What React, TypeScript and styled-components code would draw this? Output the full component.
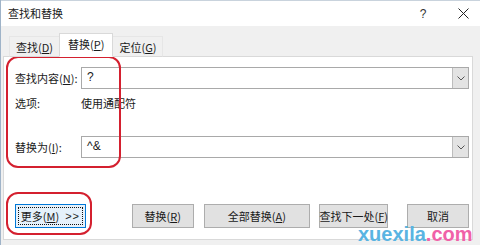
import styled, { createGlobalStyle } from "styled-components";

const GlobalStyle = createGlobalStyle`
    html, body {
        margin: 0;
        padding: 0;
        background: #f0f0f0;
    }
    body {
        font-family: "Noto Sans CJK SC", "Noto Sans", sans-serif;
        font-size: 11px;
        color: #1a1a1a;
    }
`;

const Window = styled.div`
    position: relative;
    width: 480px;
    height: 245px;
    overflow: hidden;
    display: flex;
    flex-direction: column;
    background: #f0f0f0;
    border-left: 1px solid #9fb3c8;
    box-sizing: border-box;
`;

const TitleBar = styled.div`
    height: 26px;
    flex-shrink: 0;
    display: flex;
    align-items: center;
    background: #ffffff;
    border-top: 1px solid #c9d3dd;
    box-sizing: border-box;
    padding-left: 7px;
`;

const Title = styled.span`
    flex: 1;
    font-size: 11px;
    line-height: 1;
`;

const TitleButton = styled.span<{ $w: number }>`
    width: ${(p) => p.$w}px;
    display: flex;
    justify-content: center;
    align-items: center;
    font-family: "Liberation Sans", sans-serif;
    font-size: 12px;
    color: #333;
`;

const TabStrip = styled.div`
    height: 31px;
    flex-shrink: 0;
    display: flex;
    align-items: flex-end;
    padding-left: 8px;
    position: relative;
    z-index: 1;
    margin-bottom: -1px;
`;

const Tab = styled.div<{ $active?: boolean }>`
    box-sizing: border-box;
    height: ${(p) => (p.$active ? "24px" : "21px")};
    padding: 0 ${(p) => (p.$active ? "8px" : "6px")};
    display: flex;
    align-items: center;
    justify-content: center;
    padding-bottom: ${(p) => (p.$active ? "2px" : "0")};
    background: ${(p) => (p.$active ? "#ffffff" : "#f0f0f0")};
    border: 1px solid ${(p) => (p.$active ? "#d9d9d9" : "#e6e6e6")};
    border-bottom: ${(p) => (p.$active ? "1px solid #ffffff" : "1px solid #d9d9d9")};
    margin-left: ${(p) => (p.$active ? "-1px" : "0")};
    margin-right: ${(p) => (p.$active ? "-1px" : "0")};
    position: relative;
    z-index: ${(p) => (p.$active ? 2 : 1)};
    font-size: 11px;
    white-space: nowrap;
`;

const Key = styled.span`
    text-decoration: underline;
    text-decoration-thickness: 1px;
    text-underline-offset: 1px;
`;

const Panel = styled.div`
    box-sizing: border-box;
    margin: 0 7px 0 2px;
    height: 184px;
    background: #ffffff;
    border: 1px solid #d9d9d9;
    display: flex;
    flex-direction: column;
    padding: 10px 3px 0 11px;
`;

const Form = styled.div`
    display: grid;
    grid-template-columns: 66px 1fr;
    align-items: center;
`;

const Label = styled.span<{ $top?: number }>`
    font-size: 11px;
    white-space: nowrap;
    margin-top: ${(p) => p.$top ?? 0}px;
`;

const Value = styled.span<{ $top?: number }>`
    font-size: 11px;
    margin-top: ${(p) => p.$top ?? 0}px;
`;

const ComboBox = styled.div<{ $top?: number }>`
    box-sizing: border-box;
    height: 22px;
    margin-top: ${(p) => p.$top ?? 0}px;
    border: 1px solid #a9a9a9;
    display: flex;
    align-items: stretch;
    background: #fff;
`;

const ComboText = styled.span`
    flex: 1;
    padding-left: 5px;
    display: flex;
    align-items: center;
    font-family: "Liberation Sans", sans-serif;
    font-size: 12px;
    padding-bottom: 3px;
`;

const DropButton = styled.span`
    width: 15px;
    display: flex;
    align-items: center;
    justify-content: center;
    background: #e3e3e3;
    border-left: 1px solid #bdbdbd;
`;

const ButtonRow = styled.div`
    margin-top: 46px;
    display: flex;
    align-items: center;
`;

const Button = styled.div<{ $width: number; $gap?: number; $focused?: boolean }>`
    box-sizing: border-box;
    width: ${(p) => p.$width}px;
    height: 24px;
    margin-left: ${(p) => p.$gap ?? 0}px;
    display: flex;
    align-items: center;
    justify-content: center;
    white-space: nowrap;
    background: ${(p) => (p.$focused ? "#e5f1fb" : "#e1e1e1")};
    border: 1px solid ${(p) => (p.$focused ? "#0078d7" : "#adadad")};
    font-size: 11px;
    position: relative;
    ${(p) =>
        p.$focused &&
        `
        &::after {
            content: "";
            position: absolute;
            inset: 2px;
            border: 1px dotted #111;
        }
    `}
`;

const Arrows = styled.span`
    font-family: "Liberation Sans", sans-serif;
    margin-left: 6px;
    letter-spacing: 1px;
`;

const Annotation = styled.div<{ $x: number; $y: number; $w: number; $h: number }>`
    position: absolute;
    left: ${(p) => p.$x}px;
    top: ${(p) => p.$y}px;
    width: ${(p) => p.$w}px;
    height: ${(p) => p.$h}px;
    box-sizing: border-box;
    border: 2px solid #d4202f;
    border-radius: 12px;
    pointer-events: none;
`;

const Watermark = styled.div`
    position: absolute;
    left: 357px;
    top: 224px;
    font-family: "Liberation Sans", sans-serif;
    font-weight: bold;
    font-size: 20px;
    line-height: 1;
`;

const Blue = styled.span`
    color: #5ab4e2;
`;

const Pink = styled.span`
    color: #f062a8;
`;

const Chevron = () => (
    <svg width="8" height="5" viewBox="0 0 8 5">
        <path d="M0.5 0.5 L4 4 L7.5 0.5" fill="none" stroke="#555" strokeWidth="1" />
    </svg>
);

const CloseIcon = () => (
    <svg width="11" height="11" viewBox="0 0 11 11">
        <path d="M0.5 0.5 L10.5 10.5 M10.5 0.5 L0.5 10.5" stroke="#222" strokeWidth="1" />
    </svg>
);

const App = () => {
    return (
        <>
            <GlobalStyle />
            <Window>
                <TitleBar>
                    <Title>查找和替换</Title>
                    <TitleButton $w={40}>?</TitleButton>
                    <TitleButton $w={3} />
                    <TitleButton $w={34}>
                        <CloseIcon />
                    </TitleButton>
                </TitleBar>
                <TabStrip>
                    <Tab>查找(<Key>D</Key>)</Tab>
                    <Tab $active>替换(<Key>P</Key>)</Tab>
                    <Tab>定位(<Key>G</Key>)</Tab>
                </TabStrip>
                <Panel>
                    <Form>
                        <Label>查找内容(<Key>N</Key>):</Label>
                        <ComboBox>
                            <ComboText>?</ComboText>
                            <DropButton>
                                <Chevron />
                            </DropButton>
                        </ComboBox>
                        <Label $top={6}>选项:</Label>
                        <Value $top={6}>使用通配符</Value>
                        <Label $top={25}>替换为(<Key>I</Key>):</Label>
                        <ComboBox $top={25}>
                            <ComboText>^&amp;</ComboText>
                            <DropButton>
                                <Chevron />
                            </DropButton>
                        </ComboBox>
                    </Form>
                    <ButtonRow>
                        <Button $width={71} $focused>
                            更多(<Key>M</Key>)<Arrows>&gt;&gt;</Arrows>
                        </Button>
                        <Button $width={62} $gap={46}>替换(<Key>R</Key>)</Button>
                        <Button $width={107} $gap={10}>全部替换(<Key>A</Key>)</Button>
                        <Button $width={69} $gap={9}>查找下一处(<Key>F</Key>)</Button>
                        <Button $width={62} $gap={19}>取消</Button>
                    </ButtonRow>
                </Panel>
                <Annotation $x={5} $y={56} $w={115} $h={112} />
                <Annotation $x={5} $y={192} $w={86} $h={43} />
                <Watermark>
                    <Blue>xuexila</Blue>
                    <Pink>.com</Pink>
                </Watermark>
            </Window>
        </>
    );
};

export default App;
